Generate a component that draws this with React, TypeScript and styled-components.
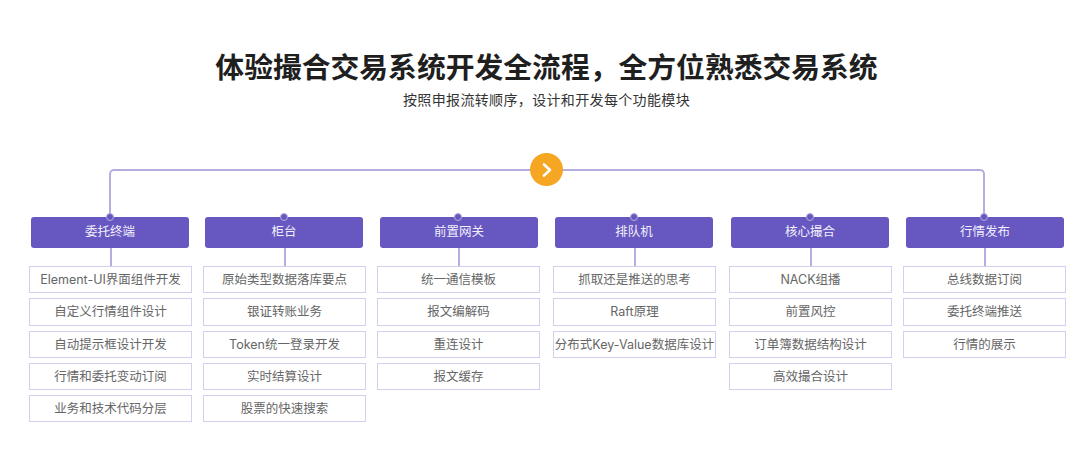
import styled, { createGlobalStyle } from 'styled-components';

const Columns = [
  {
    title: '委托终端',
    items: ['Element-UI界面组件开发', '自定义行情组件设计', '自动提示框设计开发', '行情和委托变动订阅', '业务和技术代码分层'],
  },
  {
    title: '柜台',
    items: ['原始类型数据落库要点', '银证转账业务', 'Token统一登录开发', '实时结算设计', '股票的快速搜索'],
  },
  {
    title: '前置网关',
    items: ['统一通信模板', '报文编解码', '重连设计', '报文缓存'],
    nudge: true,
  },
  {
    title: '排队机',
    items: ['抓取还是推送的思考', 'Raft原理', '分布式Key-Value数据库设计'],
  },
  {
    title: '核心撮合',
    items: ['NACK组播', '前置风控', '订单簿数据结构设计', '高效撮合设计'],
  },
  {
    title: '行情发布',
    items: ['总线数据订阅', '委托终端推送', '行情的展示'],
    nudge: true,
  },
];

const App = () => {
  return (
    <Page>
      <GlobalStyle />
      <Title>体验撮合交易系统开发全流程，全方位熟悉交易系统</Title>
      <Subtitle>按照申报流转顺序，设计和开发每个功能模块</Subtitle>
      <Rail>
        <NextButton>
          <svg width="16" height="16" viewBox="0 0 16 16" fill="none">
            <path d="M5 2.5 L11 8 L5 13.5" stroke="#fff" strokeWidth="2.6" strokeLinecap="round" strokeLinejoin="round" />
          </svg>
        </NextButton>
      </Rail>
      <Board>
        {Columns.map(column => (
          <Column key={column.title}>
            <Head $nudge={!!column.nudge}>{column.title}</Head>
            <Stem />
            {column.items.map(item => (
              <Item key={item}>{item}</Item>
            ))}
          </Column>
        ))}
      </Board>
    </Page>
  );
};

export default App;

const GlobalStyle = createGlobalStyle`
  html, body {
    margin: 0;
    background: #fff;
  }
`;

const Page = styled.div`
  width: 1076px;
  height: 460px;
  overflow: hidden;
  box-sizing: border-box;
  padding-top: 48px;
  font-family: 'Liberation Sans', 'Noto Sans CJK SC', sans-serif;
`;

const Title = styled.h1`
  margin: 0 0 0 17px;
  height: 40px;
  line-height: 40px;
  font-size: 28.8px;
  font-weight: 700;
  color: #1f1f1f;
  text-align: center;
  white-space: nowrap;
`;

const Subtitle = styled.p`
  margin: 2px 0 0 17px;
  height: 20px;
  line-height: 20px;
  font-size: 14px;
  letter-spacing: 0.35px;
  color: #333;
  text-align: center;
`;

const Rail = styled.div`
  position: relative;
  box-sizing: border-box;
  width: 876px;
  height: 48px;
  margin: 59px 0 0 109px;
  border: 2px solid #b4aee0;
  border-bottom: 0;
  border-radius: 5px 5px 0 0;
`;

const NextButton = styled.div`
  position: absolute;
  top: -18px;
  left: 419px;
  width: 33px;
  height: 33px;
  border-radius: 50%;
  background: #f5a623;
  display: flex;
  align-items: center;
  justify-content: center;
`;

const Board = styled.div`
  display: flex;
  padding-left: 29px;
  gap: 11px;
`;

const Column = styled.div`
  flex: none;
  width: 163px;
  display: flex;
  flex-direction: column;
  align-items: center;
  gap: 5px;

  &:nth-child(4) {
    margin-left: 2px;
  }
  &:nth-child(5) {
    margin-left: 2px;
  }
`;

const Head = styled.div<{ $nudge: boolean }>`
  position: relative;
  width: 158px;
  height: 31px;
  margin-left: ${({ $nudge }) => ($nudge ? '1px' : '-1px')};
  line-height: 31px;
  border-radius: 3px;
  background: #6757c1;
  color: #f1effa;
  font-size: 12.5px;
  text-align: center;

  &::before {
    content: '';
    position: absolute;
    top: -4px;
    left: 50%;
    margin-left: ${({ $nudge }) => ($nudge ? '-5px' : '-4px')};
    box-sizing: border-box;
    width: 8px;
    height: 8px;
    border-radius: 50%;
    border: 1.5px solid #b4aee0;
    background: #6757c1;
  }
`;

const Stem = styled.div`
  width: 2px;
  height: 18px;
  margin: -5px 0 -5px;
  background: #b4aee0;
`;

const Item = styled.div`
  box-sizing: border-box;
  width: 163px;
  height: 27.25px;
  line-height: 25px;
  border: 1px solid #d3cfee;
  background: #fff;
  color: #666;
  font-family: Inter, 'Noto Sans CJK SC', sans-serif;
  font-size: 12.5px;
  text-align: center;
  white-space: nowrap;
`;
